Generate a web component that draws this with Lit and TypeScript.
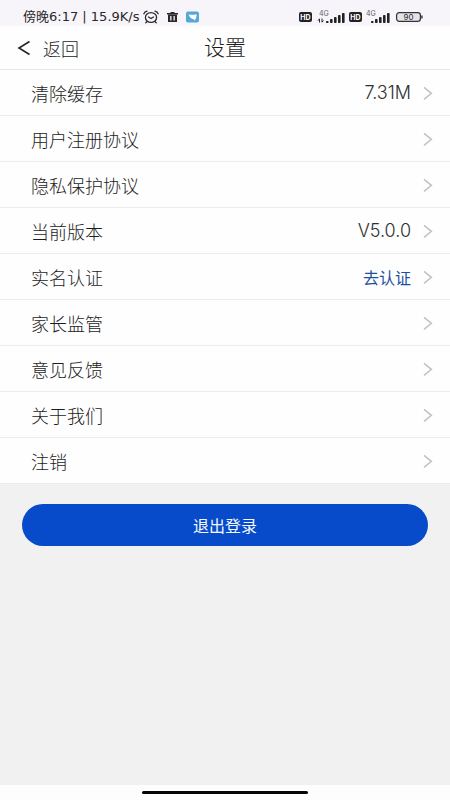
import { LitElement, html, css, svg, nothing } from "lit";
import { customElement, property } from "lit/decorators.js";

interface Item {
  label: string;
  value?: string;
  link?: boolean;
}

const ITEMS: Item[] = [
  { label: "清除缓存", value: "7.31M" },
  { label: "用户注册协议" },
  { label: "隐私保护协议" },
  { label: "当前版本", value: "V5.0.0" },
  { label: "实名认证", value: "去认证", link: true },
  { label: "家长监管" },
  { label: "意见反馈" },
  { label: "关于我们" },
  { label: "注销" },
];

@customElement("status-bar")
export class StatusBar extends LitElement {
  static styles = css`
    :host {
      display: flex;
      align-items: flex-end;
      justify-content: space-between;
      height: 26px;
      padding: 0 27px 0 23px;
      box-sizing: border-box;
      background: #f7f5f9;
      color: #29292c;
    }
    .group {
      display: flex;
      align-items: center;
      height: 18px;
    }
    .left {
      gap: 8px;
    }
    .right {
      gap: 4px;
    }
    .clock {
      display: flex;
      align-items: center;
      gap: 4px;
    }
    .time {
      font-family: "DejaVu Sans", "Noto Sans CJK SC", sans-serif;
      font-size: 13px;
      line-height: 18px;
      font-weight: 400;
      white-space: nowrap;
    }
    svg {
      display: block;
      flex: none;
    }
    .battery {
      margin-left: 2px;
    }
    text {
      font-family: Inter, sans-serif;
    }
  `;

  private hd() {
    return html`<svg width="13" height="10" viewBox="0 0 13 10" aria-label="HD">
      <rect width="13" height="10" rx="2" fill="#222224" />
      <text x="6.5" y="7.6" font-size="7" font-weight="700" fill="#fff" text-anchor="middle">HD</text>
    </svg>`;
  }

  private signal(data: boolean) {
    const heights = [2, 4, 6, 8, 10];
    const width = data ? 29 : 24;
    const start = width - 19;
    return html`<svg width=${width} height="14" viewBox="0 0 ${width} 14" aria-label="4G">
      <text x=${data ? 3 : 0} y="6" font-size="7" font-weight="400" fill="#5b5b60">4G</text>
      ${data
        ? svg`<path d="M3.5 12.5V8.8L2 10.6M6 8.5V12.2L7.5 10.4" fill="none" stroke="#29292c"/>`
        : nothing}
      ${heights.map(
        (h, i) => svg`<rect x=${start + i * 4} y=${13 - h} width="2.6" height=${h} rx="0.8" fill="#222224"/>`
      )}
    </svg>`;
  }

  render() {
    return html`
      <div class="group left">
        <div class="clock">
          <span class="time">傍晚6:17 | 15.9K/s</span>
          <svg width="16" height="14" viewBox="0 0 16 14" fill="none" stroke="#29292c" stroke-width="1.3" stroke-linecap="round">
            <ellipse cx="8" cy="7.5" rx="5.6" ry="4.9" />
            <path d="M.9 3.8Q1.6 1.8 4 1.2M15.1 3.8Q14.4 1.8 12 1.2M5.5 7L8 8.6L10.5 7M3.8 11.8L2.8 12.8M12.2 11.8L13.2 12.8" />
          </svg>
        </div>
        <svg width="11" height="12" viewBox="0 0 11 12" fill="#29292c">
          <path d="M3.5 1h4v1H11v1.6H0V2h3.5z" />
          <path fill-rule="evenodd" d="M1 3.5h9V11H1zM3.2 5v4.6h1.3V5zM6.5 5v4.6h1.3V5z" />
        </svg>
        <svg width="13" height="12" viewBox="0 0 13 12">
          <rect y="0.5" width="13" height="11" rx="2" fill="#55a7d6" />
          <path d="M2.5 3.2Q6.5 4.2 10.7 3.2Q10.8 6.7 8.6 9.6L7.6 8.2Q4 7.5 2.5 3.2z" fill="#fff" />
        </svg>
      </div>
      <div class="group right">
        ${this.hd()} ${this.signal(true)} ${this.hd()} ${this.signal(false)}
        <svg class="battery" width="27" height="10" viewBox="0 0 27 10" aria-label="90">
          <rect x=".6" y=".6" width="23.8" height="8.8" rx="2.6" fill="#e6e4e8" stroke="#333336" stroke-width="1.2" />
          <rect x="25.2" y="3.5" width="1.4" height="3" fill="#333336" />
          <text x="12.5" y="8" font-size="8" font-weight="400" fill="#29292c" text-anchor="middle">90</text>
        </svg>
      </div>
    `;
  }
}

@customElement("setting-row")
export class SettingRow extends LitElement {
  @property({ attribute: false }) item!: Item;

  static styles = css`
    :host {
      display: block;
    }
    .row {
      display: flex;
      align-items: center;
      width: 100%;
      height: 46px;
      padding: 0 17px 0 31px;
      box-sizing: border-box;
      border: 0;
      border-bottom: 1px solid #ebebeb;
      background: #fefefe;
      color: #1c1c1c;
      font: inherit;
      font-size: 18px;
      text-align: left;
      cursor: pointer;
    }
    .label {
      flex: 1;
    }
    .value {
      color: #303030;
    }
    .link {
      color: #1c509e;
      font-size: 16px;
      font-weight: 400;
    }
    .chevron {
      display: block;
      margin-left: 12px;
    }
  `;

  render() {
    const { label, value, link } = this.item;
    return html`<button class="row" type="button">
      <span class="label">${label}</span>
      ${value ? html`<span class="value ${link ? "link" : ""}">${value}</span>` : nothing}
      <svg class="chevron" width="10" height="14" viewBox="0 0 10 14" fill="none" stroke="#c2c2c2" stroke-width="1.5">
        <path d="M1 1.3L8.4 7.3L1 13.3" />
      </svg>
    </button>`;
  }
}

@customElement("app-root")
export class AppRoot extends LitElement {
  static styles = css`
    :host {
      display: flex;
      flex-direction: column;
      min-height: 100vh;
      background: #f1f1f1;
      font-family: Inter, "Noto Sans CJK SC", sans-serif;
      font-weight: 300;
    }
    .header {
      display: grid;
      grid-template-columns: 1fr auto 1fr;
      align-items: center;
      height: 44px;
      padding: 0 17px;
      box-sizing: border-box;
      border-bottom: 1px solid #e6e6e6;
      background: #fefefe;
      color: #1c1c1c;
    }
    .back {
      display: flex;
      align-items: center;
      justify-self: start;
      gap: 12px;
      padding: 0;
      border: 0;
      background: none;
      color: inherit;
      font: inherit;
      font-size: 18px;
      cursor: pointer;
    }
    .title {
      margin: 0;
      font-size: 21px;
      font-weight: inherit;
      line-height: 30px;
    }
    .list {
      margin: 0;
      padding: 0;
      list-style: none;
    }
    .actions {
      flex: 1;
      padding: 20px 22px;
    }
    .logout {
      display: block;
      width: 100%;
      height: 42px;
      border: 0;
      border-radius: 21px;
      background: #074bca;
      color: #f4f8ff;
      font: inherit;
      font-size: 16px;
      font-weight: 400;
      cursor: pointer;
    }
    .footer {
      display: flex;
      justify-content: center;
      align-items: center;
      height: 15px;
      background: #fdfdfd;
    }
    .home {
      width: 37%;
      height: 3px;
      border-radius: 2px;
      background: #050505;
    }
  `;

  render() {
    return html`
      <status-bar></status-bar>
      <header class="header">
        <button class="back" type="button">
          <svg width="14" height="16" viewBox="0 0 14 16" fill="none" stroke="#242424" stroke-width="1.6">
            <path d="M12.5 1.5L2 8L12.5 14.5" />
          </svg>
          返回
        </button>
        <h1 class="title">设置</h1>
      </header>
      <ul class="list">
        ${ITEMS.map((item) => html`<li><setting-row .item=${item}></setting-row></li>`)}
      </ul>
      <div class="actions">
        <button class="logout" type="button">退出登录</button>
      </div>
      <div class="footer"><div class="home"></div></div>
    `;
  }
}
